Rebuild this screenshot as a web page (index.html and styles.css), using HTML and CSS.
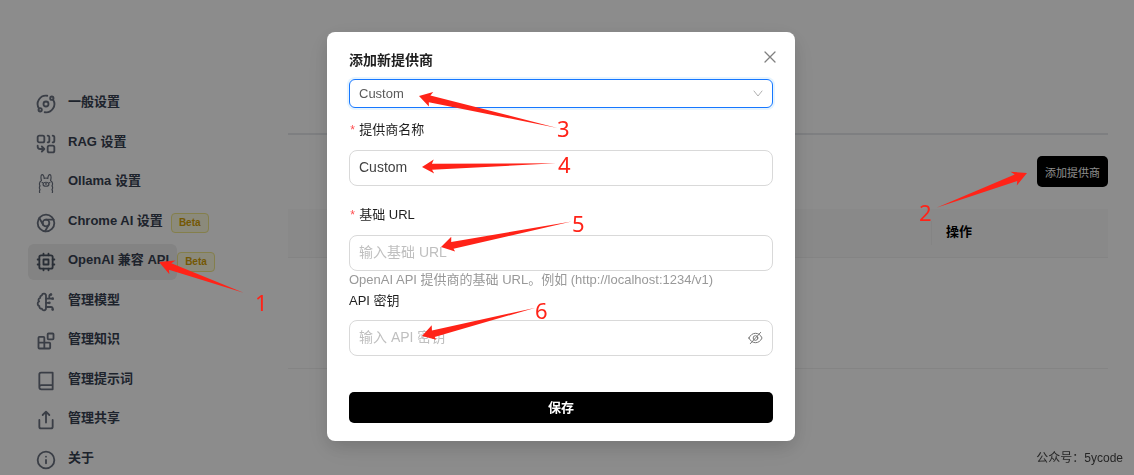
FILE: index.html
```
<!DOCTYPE html>
<html lang="zh-CN">
<head>
  <meta charset="UTF-8" />
  <meta name="viewport" content="width=device-width, initial-scale=1.0"/>
  <title>OpenAI 兼容 API</title>
  <link rel="stylesheet" href="styles.css">
</head>
<body>

  <div class="page">
    <nav class="sidebar">
      <ul class="menu">
        <li>
          <a class="menu-item" href="#general">
            <svg class="icon" viewBox="0 0 24 24"><circle cx="12" cy="12" r="3"/><circle cx="19" cy="5" r="2"/><circle cx="5" cy="19" r="2"/><path d="M10.4 21.9a10 10 0 0 0 9.941-15.416M13.5 2.1a10 10 0 0 0-9.841 15.416"/></svg>
            <span>一般设置</span>
          </a>
        </li>
        <li>
          <a class="menu-item" href="#rag">
            <svg class="icon" viewBox="0 0 24 24"><path d="M10 18H5a3 3 0 0 1-3-3v-1M14 2a2 2 0 0 1 2 2v4a2 2 0 0 1-2 2M20 2a2 2 0 0 1 2 2v4a2 2 0 0 1-2 2M7 21l3-3-3-3"/><rect x="14" y="14" width="8" height="8" rx="2"/><rect x="2" y="2" width="8" height="8" rx="2"/></svg>
            <span>RAG 设置</span>
          </a>
        </li>
        <li>
          <a class="menu-item" href="#ollama">
            <svg class="icon icon-thin" viewBox="0 0 24 24"><path d="M4.500 24c-.6-1.500-.4-2.800.3-4-1-1.500-1-3 0-4.500-1.200-2-.8-5.200 1.700-6.300C5.800 6 5.800 2.500 7.200 2c1.500-.3 2.500 2 2.600 4.500 1.400-.6 3-.6 4.400 0 .1-2.500 1.100-4.800 2.600-4.500 1.400.5 1.400 4 .7 7.200 2.500 1.100 2.900 4.300 1.700 6.300 1 1.500 1 3 0 4.500.7 1.200.9 2.500.3 4"/><ellipse cx="12" cy="13.500" rx="3.500" ry="2.400"/><path d="M11.300 13l.7.500.7-.5M7.300 11.500h.5M16.200 11.500h.5"/></svg>
            <span>Ollama 设置</span>
          </a>
        </li>
        <li>
          <a class="menu-item" href="#chrome">
            <svg class="icon" viewBox="0 0 24 24"><circle cx="12" cy="12" r="10"/><circle cx="12" cy="12" r="4"/><path d="M21.170 8H12M3.950 6.060L8.540 14M10.880 21.940L15.460 14"/></svg>
            <span>Chrome AI 设置</span>
          </a>
          <span class="badge">Beta</span>
        </li>
        <li>
          <a class="menu-item active" href="#openai">
            <svg class="icon" viewBox="0 0 24 24"><rect x="4" y="4" width="16" height="16" rx="2"/><rect x="9" y="9" width="6" height="6"/><path d="M15 2v2M15 20v2M2 15h2M2 9h2M20 15h2M20 9h2M9 2v2M9 20v2"/></svg>
            <span>OpenAI 兼容 API</span>
          </a>
          <span class="badge">Beta</span>
        </li>
        <li>
          <a class="menu-item" href="#model">
            <svg class="icon" viewBox="0 0 24 24"><path d="M12 4.500a2.500 2.500 0 0 0-4.960-.46 2.500 2.500 0 0 0-1.980 3 2.500 2.500 0 0 0-1.320 4.240 3 3 0 0 0 .34 5.580 2.500 2.500 0 0 0 2.960 3.080A2.500 2.500 0 0 0 12 19.500V4.500"/><path d="M16 8V5a2 2 0 0 1 2-2M12 13h4M12 18h6a2 2 0 0 1 2 2v1M12 8h8"/><circle cx="20" cy="8" r=".5"/><circle cx="16" cy="13" r=".5"/><circle cx="20" cy="21" r=".5"/><circle cx="18" cy="3" r=".5"/></svg>
            <span>管理模型</span>
          </a>
        </li>
        <li>
          <a class="menu-item" href="#knowledge">
            <svg class="icon" viewBox="0 0 24 24"><rect x="14" y="3" width="7" height="7" rx="1"/><path d="M10 21V8a1 1 0 0 0-1-1H4a1 1 0 0 0-1 1v12a1 1 0 0 0 1 1h12a1 1 0 0 0 1-1v-5a1 1 0 0 0-1-1H3"/></svg>
            <span>管理知识</span>
          </a>
        </li>
        <li>
          <a class="menu-item" href="#prompt">
            <svg class="icon" viewBox="0 0 24 24"><path d="M4 19.500V4a2 2 0 0 1 2-2h14v20H6.500a2.500 2.500 0 0 1 0-5H20"/></svg>
            <span>管理提示词</span>
          </a>
        </li>
        <li>
          <a class="menu-item" href="#share">
            <svg class="icon" viewBox="0 0 24 24"><path d="M4 12v8a2 2 0 0 0 2 2h12a2 2 0 0 0 2-2v-8M16 6l-4-4-4 4M12 2v13"/></svg>
            <span>管理共享</span>
          </a>
        </li>
        <li>
          <a class="menu-item" href="#about">
            <svg class="icon" viewBox="0 0 24 24"><circle cx="12" cy="12" r="10"/><path d="M12 16v-4M12 8h.01"/></svg>
            <span>关于</span>
          </a>
        </li>
      </ul>
    </nav>

    <main class="content">
      <div class="toolbar">
        <button class="add-btn" type="button">添加提供商</button>
      </div>
      <table class="providers">
        <thead>
          <tr><th></th><th></th><th class="col-action">操作</th></tr>
        </thead>
        <tbody>
          <tr><td colspan="3"></td></tr>
        </tbody>
      </table>
    </main>
  </div>

  <div class="mask">
    <form class="modal" role="dialog" aria-labelledby="modalTitle">
      <header class="modal-header">
        <h1 id="modalTitle">添加新提供商</h1>
        <button class="close" type="button" aria-label="关闭">
          <svg viewBox="0 0 12 12"><path d="M1 1l10 10M11 1L1 11"/></svg>
        </button>
      </header>

      <div class="select-box">
        <select class="provider" aria-label="提供商">
          <option>Custom</option>
        </select>
        <svg class="arrow-down" viewBox="0 0 10 8"><path d="M1 1l4 5 4-5"/></svg>
      </div>

      <div class="field">
        <label class="required" for="name">提供商名称</label>
        <input id="name" type="text" value="Custom">
      </div>

      <div class="field field-url">
        <label class="required" for="url">基础 URL</label>
        <input id="url" type="text" placeholder="输入基础 URL">
        <p class="help">OpenAI API 提供商的基础 URL。例如 (http://localhost:1234/v1)</p>
      </div>

      <div class="field field-key">
        <label for="key">API 密钥</label>
        <div class="password">
          <input id="key" type="password" placeholder="输入 API 密钥">
          <button class="eye" type="button" aria-label="显示密钥">
            <svg viewBox="0 0 16 14"><path d="M1 7c1.600-3.300 4-5 7-5s5.400 1.700 7 5c-1.600 3.300-4 5-7 5s-5.400-1.700-7-5z"/><circle cx="8" cy="7" r="2.500"/><path d="M13.500 1L2.500 13"/></svg>
          </button>
        </div>
      </div>

      <button class="save" type="submit">保存</button>
    </form>
  </div>

  <!-- step arrows -->
  <svg class="steps" width="1134" height="475" viewBox="0 0 1134 475">
    <path transform="translate(159 262) rotate(20)" d="M0 0L15-7L12-3L90 0L12 4L14 8z"/>
    <path transform="translate(1027 173) rotate(159)" d="M0 0L14-8L12-4L97 0L12 3L15 7z"/>
    <path transform="translate(419 96) rotate(13)" d="M0 0L13-7L11-3L142 0L11 4L12 8z"/>
    <path transform="translate(422 167) rotate(-2)" d="M0 0L12-7L10-3L134 1L10 3L12 7z"/>
    <path transform="translate(441 247) rotate(-11)" d="M0 0L12-8L11-3L133 0L12 4L13 7z"/>
    <path transform="translate(422 336) rotate(-14)" d="M0 0L12-8L11-3L117 0L12 4L13 7z"/>
    <text x="255" y="311">1</text>
    <text x="919" y="221">2</text>
    <text x="557" y="137">3</text>
    <text x="558" y="173">4</text>
    <text x="572" y="232">5</text>
    <text x="535" y="319">6</text>
  </svg>

  <div class="watermark">公众号：5ycode</div>

</body>
</html>
```

FILE: styles.css
```
* {
  box-sizing: border-box;
}
body {
  margin: 0;
  height: 100vh;
  overflow: hidden;
  background-color: #fff;
  color: #1f1f1f;
  font-family: "Liberation Sans", "Noto Sans CJK SC", sans-serif;
  font-size: 13px;
  line-height: 20px;
}
button, input, select {
  font-family: inherit;
  font-size: inherit;
}
svg {
  fill: none;
  stroke: currentColor;
  stroke-linecap: round;
  stroke-linejoin: round;
}

/* page behind the dialog */
.page {
  display: flex;
  padding: 86px 26px 0 28px;
}
.sidebar {
  width: 260px;
}
.menu {
  margin: 0;
  padding: 0;
  list-style: none;
}
.menu li {
  display: flex;
  align-items: center;
  margin-bottom: 4px;
}
.menu li:nth-child(even) {
  margin-bottom: 3px;
}
.menu-item {
  display: flex;
  gap: 12px;
  padding: 8px;
  border-radius: 6px;
  color: #374151;
  font-weight: bold;
  line-height: 16px;
  text-decoration: none;
}
.menu-item.active {
  background-color: #eee;
}
.icon {
  width: 20px;
  height: 20px;
  color: #6b7280;
  stroke-width: 2.2;
}
.icon-thin {
  stroke-width: 1.4;
}
.active .icon {
  color: #4b5563;
}
.badge {
  padding: 0 7px;
  border: 1px solid #f0e88a;
  border-radius: 4px;
  background-color: #fdfbe0;
  color: #d4a106;
  font-size: 10px;
  font-weight: bold;
  line-height: 18px;
}
.content {
  flex: 1;
  padding-top: 47px;
}
.toolbar {
  display: flex;
  justify-content: flex-end;
  padding: 21px 0 22px;
  border-top: 2px solid #e5e7eb;
}
.add-btn {
  height: 31px;
  padding: 0 8px;
  border: 0;
  border-radius: 5px;
  background-color: #000;
  color: #fff;
  font-size: 11px;
}
.providers {
  width: 100%;
  border-collapse: collapse;
  table-layout: fixed;
}
.providers th {
  height: 48px;
  padding: 0 15px 2px;
  border-bottom: 1px solid #f0f0f0;
  background-color: #fafafa;
  color: #000;
  text-align: left;
}
.providers td {
  height: 111px;
  border-bottom: 1px solid #f0f0f0;
}
.providers .col-action {
  width: 177px;
  background-image: linear-gradient(#f0f0f0, #f0f0f0);
  background-position: left center;
  background-repeat: no-repeat;
  background-size: 1px 24px;
}

/* dialog */
.mask {
  position: fixed;
  inset: 0;
  display: flex;
  justify-content: center;
  align-items: flex-start;
  padding: 32px 12px 0 0;
  background-color: rgba(0, 0, 0, 0.45);
}
.modal {
  width: 468px;
  padding: 18px 22px;
  border-radius: 8px;
  background-color: #fff;
  box-shadow: 0 6px 16px rgba(0, 0, 0, 0.1), 0 8px 28px rgba(0, 0, 0, 0.08);
}
.modal-header {
  display: flex;
  justify-content: space-between;
  align-items: flex-start;
  margin-bottom: 9px;
}
.modal-header h1 {
  margin: 0;
  font-size: 14px;
  line-height: 20px;
}
.close {
  display: flex;
  padding: 1px 0 0;
  margin-right: -3px;
  border: 0;
  background: none;
  color: #808080;
}
.close svg {
  width: 12px;
  height: 12px;
  stroke-width: 1.3;
}
.select-box {
  position: relative;
  margin-bottom: 12px;
}
.provider {
  display: block;
  width: 100%;
  height: 29px;
  padding: 0 9px;
  border: 1px solid #1677ff;
  border-radius: 6px;
  background-color: #fff;
  box-shadow: 0 0 0 2px #e6f4ff;
  color: #5a5a5a;
  appearance: none;
}
.arrow-down {
  position: absolute;
  top: 11px;
  right: 10px;
  width: 10px;
  height: 8px;
  color: #b0b0b0;
}
.field {
  margin-bottom: 19px;
}
.field label {
  display: block;
  margin-bottom: 10px;
}
.required::before {
  content: "*";
  margin-right: 3px;
  color: #ff4d4f;
  font-family: "Liberation Mono", monospace;
  font-size: 12px;
  line-height: 1;
}
.field input {
  display: block;
  width: 100%;
  height: 36px;
  padding: 0 9px 2px;
  border: 1px solid #d9d9d9;
  border-radius: 8px;
  background-color: #fff;
  color: #424242;
  font-size: 14px;
}
.field input::placeholder {
  color: #bfbfbf;
}
.field-url {
  margin-bottom: 2px;
}
.help {
  margin: 0;
  color: #999;
  line-height: 18px;
}
.field-key {
  margin-bottom: 36px;
}
.field-key label {
  margin-bottom: 9px;
}
.password {
  position: relative;
}
.eye {
  position: absolute;
  top: 11px;
  right: 10px;
  display: flex;
  padding: 0;
  border: 0;
  background: none;
  color: #707070;
}
.eye svg {
  width: 15px;
  height: 14px;
}
.save {
  display: block;
  width: 100%;
  height: 31px;
  padding: 0 0 2px;
  border: 0;
  border-radius: 5px;
  background-color: #000;
  color: #fff;
  font-weight: bold;
}

/* numbered steps on top of everything */
.steps {
  position: absolute;
  top: 0;
  left: 0;
  fill: #ff2318;
  stroke: none;
  font-family: "Noto Sans", sans-serif;
  font-size: 22px;
  pointer-events: none;
}
.watermark {
  position: fixed;
  right: 11px;
  bottom: 7px;
  color: #262626;
  font-size: 12px;
}
```
